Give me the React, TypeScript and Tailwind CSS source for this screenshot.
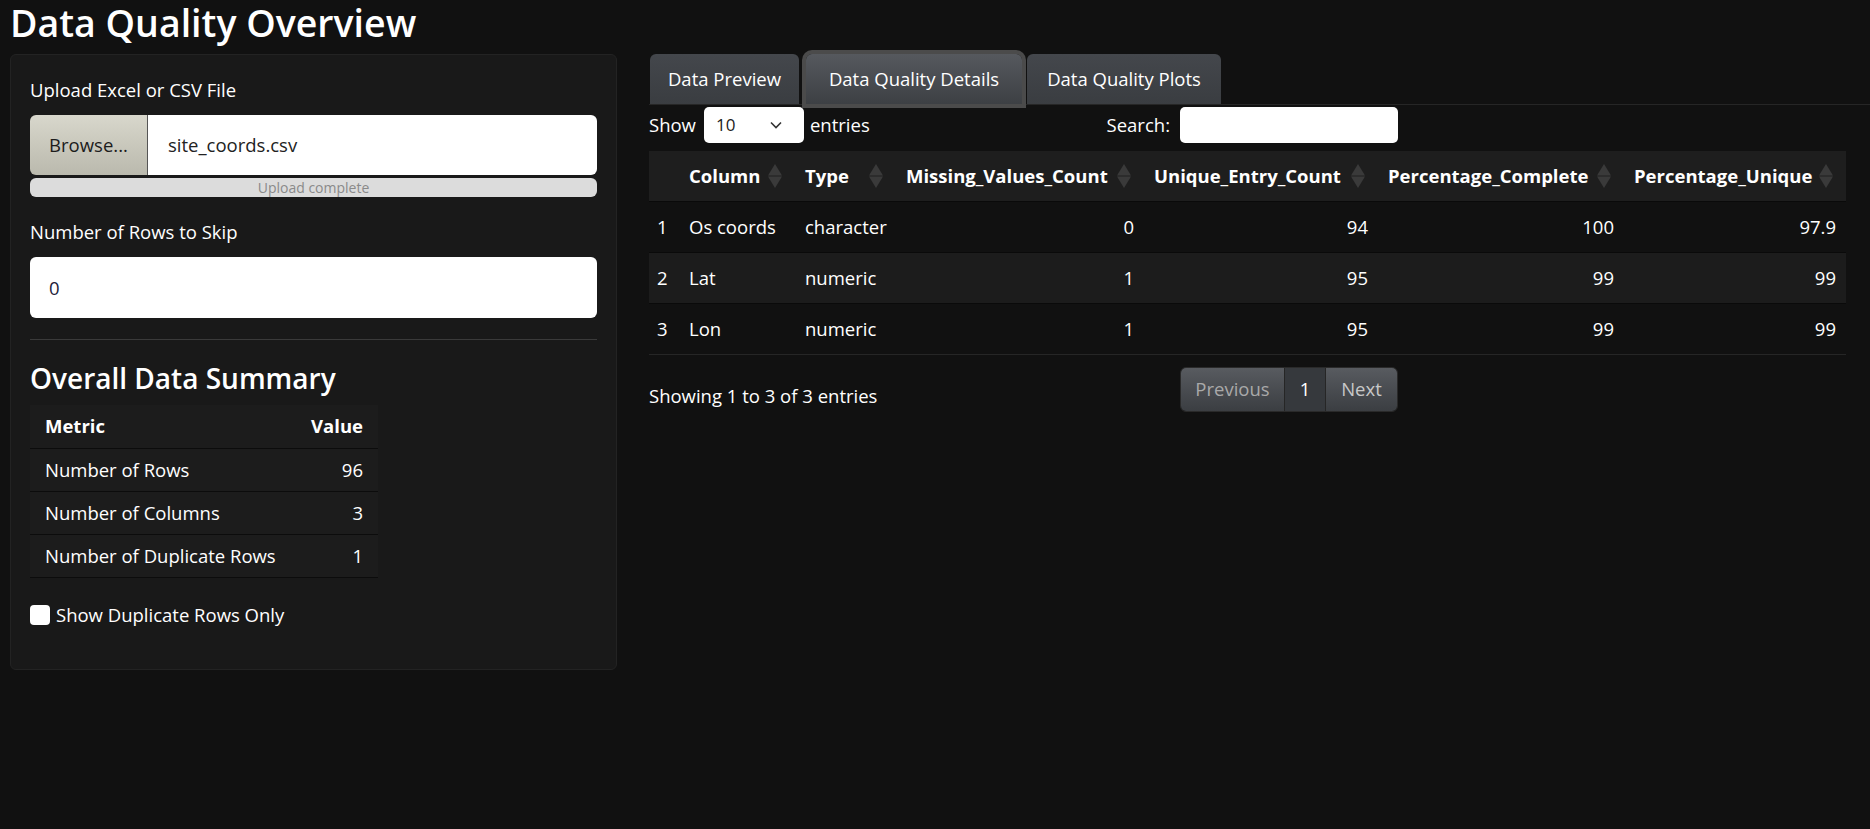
import React from "react";

const summary = [
  { metric: "Number of Rows", value: "96" },
  { metric: "Number of Columns", value: "3" },
  { metric: "Number of Duplicate Rows", value: "1" },
];

const details = [
  { n: 1, col: "Os coords", type: "character", miss: "0", uniq: "94", comp: "100", pu: "97.9" },
  { n: 2, col: "Lat", type: "numeric", miss: "1", uniq: "95", comp: "99", pu: "99" },
  { n: 3, col: "Lon", type: "numeric", miss: "1", uniq: "95", comp: "99", pu: "99" },
];

function SortIcon() {
  return (
    <svg
      className="absolute right-[13px] top-1/2 -translate-y-1/2"
      width="14"
      height="24"
      viewBox="0 0 14 24"
    >
      <polygon points="7,0 14,11.6 0,11.6" fill="#3a3a3a" />
      <polygon points="0,12.4 14,12.4 7,24" fill="#3a3a3a" />
    </svg>
  );
}

function Th({ children, w }: { children: React.ReactNode; w: string }) {
  return (
    <th className={`relative ${w} pl-[10px] pr-[30px] text-left font-bold`}>
      {children}
      <SortIcon />
    </th>
  );
}

export default function App() {
  return (
    <div className="min-h-screen w-full bg-[#111111] text-white font-['Open_Sans',sans-serif] text-[18.5px] leading-[28px]">
      <h1 className="h-[46px] pl-[10px] text-[37.5px] leading-[46px] font-semibold">Data Quality Overview</h1>

      <div className="flex mt-[7px]">
        {/* sidebar */}
        <div className="w-[607px] ml-[10px] mt-px bg-[#191919] border border-[#232323] rounded-[6px] px-[19px] pt-[21px] pb-[40px]">
          <label className="block">Upload Excel or CSV File</label>
          <div className="mt-[11px] flex h-[60px] rounded-[6px] overflow-hidden">
            <div className="w-[118px] flex items-center justify-center bg-gradient-to-b from-[#d8d7cc] to-[#bab9ad] text-[#1c1c1c] border-r border-[#555]">
              Browse...
            </div>
            <div className="flex-1 bg-white text-[#222] flex items-center pl-[20px]">site_coords.csv</div>
          </div>
          <div className="mt-[3px] h-[19px] rounded-[6px] bg-[#dcdcdc] text-[#8a8a8a] text-[14px] leading-[19px] text-center">
            Upload complete
          </div>

          <label className="block mt-[21px]">Number of Rows to Skip</label>
          <div className="mt-[11px] h-[61px] rounded-[6px] bg-white text-[#22223a] flex items-center pl-[19px]">0</div>

          <div className="mt-[21px] border-t border-[#3a3a3a]" />

          <h3 className="mt-[20px] text-[28px] leading-[36px] font-semibold">Overall Data Summary</h3>

          <table className="mt-[9px] w-[348px] bg-[#1c1c1c] border-collapse">
            <thead>
              <tr className="h-[43px] border-b border-[#0c0c0c]">
                <th className="pl-[15px] text-left font-bold">Metric</th>
                <th className="pr-[15px] text-right font-bold">Value</th>
              </tr>
            </thead>
            <tbody>
              {summary.map((r) => (
                <tr key={r.metric} className="h-[43px] border-b border-[#0c0c0c]">
                  <td className="pl-[15px]">{r.metric}</td>
                  <td className="pr-[15px] text-right">{r.value}</td>
                </tr>
              ))}
            </tbody>
          </table>

          <label className="mt-[23px] flex items-center gap-[6px]">
            <span className="w-[20px] h-[20px] rounded-[4px] bg-white" />
            Show Duplicate Rows Only
          </label>
        </div>

        {/* main */}
        <div className="ml-[32px] flex-1">
          <div className="flex items-end h-[52px] border-b border-[#262626]">
            <div className="ml-px w-[149px] h-[50px] flex items-center justify-center rounded-t-[6px] bg-gradient-to-b from-[#44474c] to-[#3a3d41]">
              Data Preview
            </div>
            <div className="ml-[7px] w-[216px] h-[50px] flex items-center justify-center rounded-t-[6px] bg-gradient-to-b from-[#56595e] to-[#3d4044] ring-4 ring-[#4b4b4b]">
              Data Quality Details
            </div>
            <div className="ml-[5px] w-[194px] h-[50px] flex items-center justify-center rounded-t-[6px] bg-gradient-to-b from-[#44474c] to-[#3a3d41]">
              Data Quality Plots
            </div>
          </div>

          <div className="w-[749px] mt-[2px] h-[36px] flex items-center justify-between">
            <div className="flex items-center">
              <span>Show</span>
              <div className="ml-[8px] w-[100px] h-[36px] bg-white rounded-[5px] text-[#222] text-[17px] flex items-center justify-between pl-[12px] pr-[22px]">
                <span>10</span>
                <svg width="12" height="8" viewBox="0 0 12 8">
                  <path d="M1 1.5 L6 6.5 L11 1.5" fill="none" stroke="#333" strokeWidth="1.6" />
                </svg>
              </div>
              <span className="ml-[6px]">entries</span>
            </div>
            <div className="flex items-center">
              <span>Search:</span>
              <div className="ml-[10px] w-[218px] h-[36px] bg-white rounded-[5px]" />
            </div>
          </div>

          <table className="mt-[8px] w-[1197px] table-fixed border-collapse">
            <thead>
              <tr className="h-[50px] bg-[#1e1e1e] border-b border-[#0a0a0a]">
                <th className="w-[30px]" />
                <Th w="w-[116px]">Column</Th>
                <Th w="w-[101px]">Type</Th>
                <Th w="w-[248px]">Missing_Values_Count</Th>
                <Th w="w-[234px]">Unique_Entry_Count</Th>
                <Th w="w-[246px]">Percentage_Complete</Th>
                <Th w="w-[222px]">Percentage_Unique</Th>
              </tr>
            </thead>
            <tbody>
              {details.map((r, i) => (
                <tr
                  key={r.n}
                  className={`h-[51px] border-b ${i === 1 ? "bg-[#1c1c1c]" : "bg-[#111111]"} ${
                    i === 2 ? "border-[#262626]" : "border-[#0a0a0a]"
                  }`}
                >
                  <td className="pl-[8px]">{r.n}</td>
                  <td className="pl-[10px]">{r.col}</td>
                  <td className="pl-[10px]">{r.type}</td>
                  <td className="pr-[10px] text-right">{r.miss}</td>
                  <td className="pr-[10px] text-right">{r.uniq}</td>
                  <td className="pr-[10px] text-right">{r.comp}</td>
                  <td className="pr-[10px] text-right">{r.pu}</td>
                </tr>
              ))}
            </tbody>
          </table>

          <div className="w-[749px] flex justify-between items-start">
            <div className="pt-[27px]">Showing 1 to 3 of 3 entries</div>
            <div className="mt-[12px] h-[45px] flex rounded-[6px] overflow-hidden border border-[#2a2a2a]">
              <div className="w-[103px] flex items-center justify-center bg-gradient-to-b from-[#585b60] to-[#3b3e42] text-[#a9a9a9]">
                Previous
              </div>
              <div className="w-[42px] flex items-center justify-center bg-[#36393d] border-x border-[#262626] text-white">
                1
              </div>
              <div className="w-[71px] flex items-center justify-center bg-gradient-to-b from-[#585b60] to-[#3b3e42] text-[#c8c8c8]">
                Next
              </div>
            </div>
          </div>
        </div>
      </div>
    </div>
  );
}
